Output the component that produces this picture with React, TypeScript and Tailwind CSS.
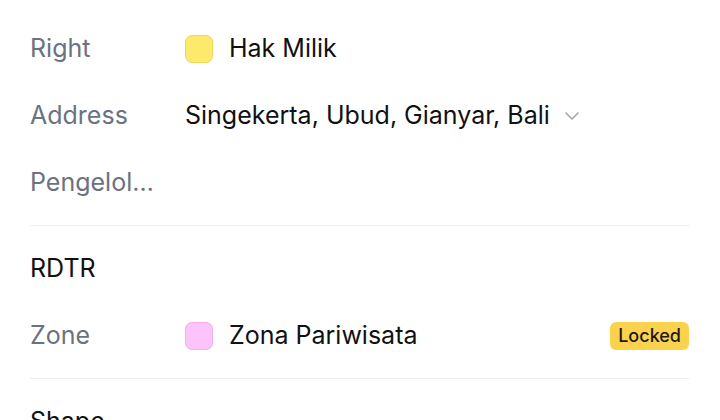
import { ChevronDown } from 'lucide-react'

function Row({ label, children, right }: { label: string; children?: React.ReactNode; right?: React.ReactNode }) {
  return (
    <div className="flex items-center h-[67px]">
      <div className="w-[155px] shrink-0">
        <div className="max-w-[128px] truncate text-[25px] text-[#6b7280]">{label}</div>
      </div>
      <div className="flex items-center flex-1 min-w-0">{children}</div>
      {right}
    </div>
  )
}

export default function App() {
  return (
    <div
      className="w-[720px] h-[420px] overflow-hidden bg-white pl-[30px] pr-[31px] pt-[15px]"
      style={{ fontFamily: 'Inter, "Noto Sans", sans-serif' }}
    >
      <Row label="Right">
        <span className="w-[28px] h-[28px] rounded-[7px] border bg-[#fde96b] border-[#efd75a] mr-[16px] shrink-0" />
        <span className="text-[25px] text-[#111111]">Hak Milik</span>
      </Row>
      <Row label="Address">
        <span className="text-[25px] text-[#111111]">Singekerta, Ubud, Gianyar, Bali</span>
        <ChevronDown size={24} strokeWidth={1.5} className="ml-[10px] text-[#9ca3af]" />
      </Row>
      <Row label="Pengelolaan" />

      <div className="h-px bg-[#eceef1] my-[9px]" />

      <div className="flex items-center h-[67px] text-[25px] text-[#111111]">RDTR</div>
      <Row
        label="Zone"
        right={
          <span className="shrink-0 rounded-[6px] bg-[#fbd24e] px-[8px] h-[28px] flex items-center text-[18px] font-medium text-[#1c1917]">
            Locked
          </span>
        }
      >
        <span className="w-[28px] h-[28px] rounded-[7px] border bg-[#fcc4f8] border-[#f2aeee] mr-[16px] shrink-0" />
        <span className="text-[25px] text-[#111111]">Zona Pariwisata</span>
      </Row>

      <div className="h-px bg-[#eceef1] my-[9px]" />

      <div className="flex items-center h-[67px] text-[25px] text-[#111111]">Shape</div>
    </div>
  )
}
